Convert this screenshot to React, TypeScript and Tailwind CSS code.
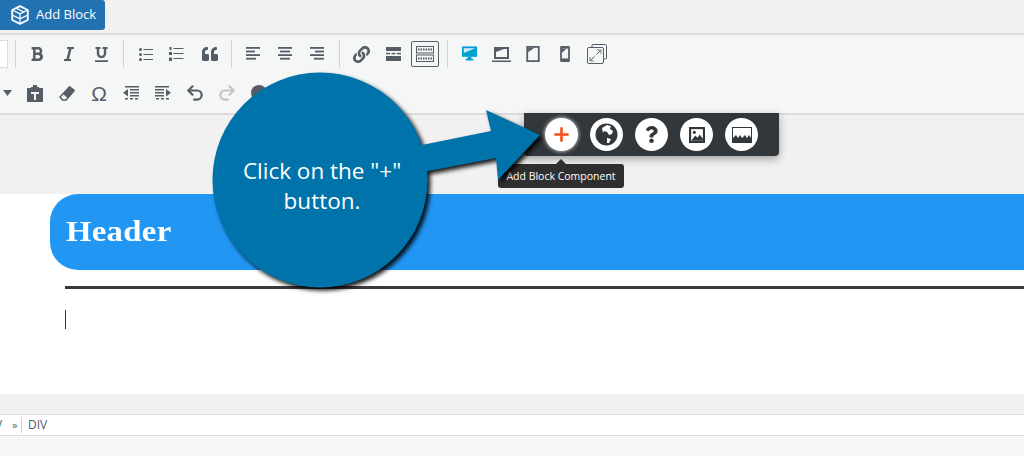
import React from "react";
import { FaBold, FaItalic, FaUnderline, FaQuoteLeft, FaLink, FaQuestion } from "react-icons/fa";
import { Undo2, Redo2, Plus } from "lucide-react";

const ICON = "#555d66";

function Btn({ children, className = "" }: { children: React.ReactNode; className?: string }) {
  return <div className={"w-8 h-7 flex items-center justify-center shrink-0 text-[#555d66] " + className}>{children}</div>;
}

function Sep() {
  return <div className="w-px h-7 bg-[#cfd1d3] shrink-0" />;
}

function Lines({ rows }: { rows: [number, number][] }) {
  return (
    <svg width="16" height="14" viewBox="0 0 16 14" fill={ICON}>
      {rows.map(([x, w], i) => (
        <rect key={i} x={x} y={i * 3.6} width={w} height="1.8" />
      ))}
    </svg>
  );
}

function ScreenIcon({ kind }: { kind: "desktop" | "laptop" | "tablet" | "phone" }) {
  if (kind === "desktop") {
    return (
      <svg width="17" height="18" viewBox="0 0 18 18">
        <path d="M1 1h16v11H1z" fill="#00a0d2" />
        <path d="M3 3h12L3 8z" fill="#cfeefa" />
        <path d="M7 12h4v2h2v2H5v-2h2z" fill="#00a0d2" />
      </svg>
    );
  }
  if (kind === "laptop") {
    return (
      <svg width="19" height="17" viewBox="0 0 19 17">
        <path d="M2 1h15v12H2z" fill={ICON} />
        <path d="M4 3h11v8H4z" fill="#f5f6f6" />
        <path d="M4 3h8L4 6z" fill={ICON} />
        <path d="M0 14.500h19v1.500H0z" fill={ICON} />
      </svg>
    );
  }
  if (kind === "tablet") {
    return (
      <svg width="14" height="16" viewBox="0 0 15 18">
        <path d="M0 0h15v18H0z" fill={ICON} />
        <path d="M2 2h11v14H2z" fill="#f5f6f6" />
        <path d="M2 2h7L2 7z" fill={ICON} />
      </svg>
    );
  }
  return (
    <svg width="10" height="16" viewBox="0 0 11 18">
      <path d="M0 1.500Q0 0 1.500 0h8Q11 0 11 1.500v15q0 1.500-1.500 1.500h-8Q0 18 0 16.500z" fill={ICON} />
      <path d="M2 3h7v11H2z" fill="#f5f6f6" />
      <path d="M2 3h5L2 8z" fill={ICON} />
    </svg>
  );
}

function Toolbar() {
  return (
    <div className="h-[80px] bg-[#f5f6f6] border-b-2 border-[#dcdcde] flex flex-col pt-[5px] overflow-hidden">
      <div className="h-7 flex items-center">
        <div className="w-[8px] h-7 bg-white border border-[#dcdcde] border-l-0 shrink-0" />
        <div className="w-[7px] shrink-0" />
        <Sep />
        <div className="w-[5px] shrink-0" />
        <Btn><FaBold size={16} /></Btn>
        <Btn><FaItalic size={16} /></Btn>
        <Btn><FaUnderline size={15} /></Btn>
        <div className="w-[6px] shrink-0" />
        <Sep />
        <div className="w-[6px] shrink-0" />
        <Btn>
          <svg width="14" height="13" viewBox="0 0 14 13" fill={ICON}>
            <circle cx="1.500" cy="1.500" r="1.500" /><circle cx="1.500" cy="6.500" r="1.500" /><circle cx="1.500" cy="11.500" r="1.500" />
            <rect x="4.500" y="1" width="9.500" height="1" /><rect x="4.500" y="6" width="9.500" height="1" /><rect x="4.500" y="11" width="9.500" height="1" />
          </svg>
        </Btn>
        <Btn className="-translate-x-[2px]">
          <svg width="15" height="14" viewBox="0 0 15 14" fill={ICON}>
            <rect x="0.500" y="0" width="2" height="3" /><rect x="0" y="5" width="3" height="3" /><rect x="0" y="10.500" width="3" height="3.500" />
            <rect x="4.500" y="1" width="10" height="1" /><rect x="4.500" y="6" width="10" height="1" /><rect x="4.500" y="11" width="10" height="1" />
          </svg>
        </Btn>
        <Btn><FaQuoteLeft size={16} /></Btn>
        <div className="w-[5px] shrink-0" />
        <Sep />
        <div className="w-[5px] shrink-0" />
        <Btn><Lines rows={[[1, 14], [1, 9], [1, 14], [1, 10]]} /></Btn>
        <Btn><Lines rows={[[1, 14], [3, 10], [1, 14], [3, 10]]} /></Btn>
        <Btn><Lines rows={[[1, 14], [6, 9], [1, 14], [5, 10]]} /></Btn>
        <div className="w-[6px] shrink-0" />
        <Sep />
        <div className="w-[5px] shrink-0" />
        <Btn><FaLink size={17} /></Btn>
        <Btn>
          <svg width="15" height="14" viewBox="0 0 15 14" fill={ICON}>
            <rect x="0" y="0" width="15" height="4" />
            <rect x="0" y="5.800" width="4" height="1.500" /><rect x="5.500" y="5.800" width="4" height="1.500" /><rect x="11" y="5.800" width="4" height="1.500" />
            <rect x="0" y="9" width="15" height="5" />
          </svg>
        </Btn>
        <div className="w-[28px] h-[26px] mx-[2px] flex items-center justify-center border border-[#555d66] rounded-[2px] shrink-0">
          <svg width="18" height="16" viewBox="0 0 18 16" fill="none" stroke={ICON}>
            <rect x="0.500" y="0.500" width="17" height="6.500" />
            <rect x="0.500" y="9" width="17" height="6.500" />
            <path d="M2 3.500h14M2 12.500h14" strokeDasharray="1.500 1" strokeWidth="2" />
          </svg>
        </div>
        <div className="w-[6px] shrink-0" />
        <Sep />
        <div className="w-[5px] shrink-0" />
        <Btn><ScreenIcon kind="desktop" /></Btn>
        <Btn><ScreenIcon kind="laptop" /></Btn>
        <Btn><ScreenIcon kind="tablet" /></Btn>
        <Btn><ScreenIcon kind="phone" /></Btn>
        <Btn>
          <svg width="20" height="20" viewBox="0 0 20 20" fill="none" stroke={ICON}>
            <path d="M5 3.500V1.500Q5 .5 6 .5h12.500q1 0 1 1V14q0 1-1 1H17" />
            <rect x="0.500" y="3.500" width="16" height="16" rx="1.500" />
            <path d="M3.500 16.500l4-4M13.500 6.500l-4 4" />
            <path d="M3 13v4h4M10 6h4v4" fill="none" strokeWidth="0.800" />
          </svg>
        </Btn>
      </div>
      <div className="h-7 flex items-center mt-[11px]">
        <div className="w-[3px] shrink-0" />
        <svg width="9" height="6" viewBox="0 0 9 6" fill={ICON} className="shrink-0"><path d="M0 0h9L4.500 6z" /></svg>
        <div className="w-[7px] shrink-0" />
        <Btn>
          <svg width="16" height="17" viewBox="0 0 16 17" fill={ICON}>
            <path d="M0 3h4V2h2V0h4v2h2v1h4v14H0z" />
            <path d="M4 7h8v2H9v6H7V9H4z" fill="#f5f6f6" />
          </svg>
        </Btn>
        <Btn>
          <svg width="16" height="15" viewBox="0 0 16 15" fill="none" stroke={ICON} strokeWidth="1.500">
            <path d="M10.500 1L15 4.500 7 14H3.500L1 11z" />
            <path d="M10.500 1L15 4.500 9 11.500 5 8z" fill={ICON} />
          </svg>
        </Btn>
        <Btn><span className="font-['Liberation_Sans',sans-serif] text-[21px] leading-none">Ω</span></Btn>
        <Btn>
          <svg width="16" height="14" viewBox="0 0 16 14" fill={ICON}>
            <rect x="2" y="0" width="14" height="1.500" /><rect x="7" y="3" width="9" height="1.500" /><rect x="7" y="6" width="9" height="1.500" /><rect x="7" y="9" width="9" height="1.500" /><rect x="2" y="12" width="3" height="1.500" /><rect x="7" y="12" width="3" height="1.500" /><rect x="12" y="12" width="3" height="1.500" />
            <path d="M0 6.700L5 3v7.500z" />
          </svg>
        </Btn>
        <Btn>
          <svg width="16" height="14" viewBox="0 0 16 14" fill={ICON}>
            <rect x="0" y="0" width="14" height="1.500" /><rect x="0" y="3" width="9" height="1.500" /><rect x="0" y="6" width="9" height="1.500" /><rect x="0" y="9" width="9" height="1.500" /><rect x="1" y="12" width="3" height="1.500" /><rect x="6" y="12" width="3" height="1.500" /><rect x="11" y="12" width="3" height="1.500" />
            <path d="M16 6.700L11 3v7.500z" />
          </svg>
        </Btn>
        <Btn><Undo2 size={20} strokeWidth={2.6} /></Btn>
        <Btn className="text-[#c2c4c6]"><Redo2 size={20} strokeWidth={2.6} /></Btn>
        <Btn>
          <div className="w-4 h-4 rounded-full bg-[#555d66]" />
        </Btn>
      </div>
    </div>
  );
}

function Popup() {
  const dark = "#32373c";
  return (
    <>
      <div className="absolute left-[524px] top-[113px] w-[255px] h-[43px] bg-[#32373c] rounded-b-[4px] shadow-[0_3px_8px_rgba(0,0,0,0.35)] flex items-center pl-[21px] gap-3">
        <div className="w-[33px] h-[33px] rounded-full bg-white flex items-center justify-center shadow-[0_0_4px_rgba(255,255,255,0.9)] shrink-0">
          <Plus size={21} strokeWidth={3} color="#f4511e" />
        </div>
        <div className="w-[33px] h-[33px] rounded-full bg-white flex items-center justify-center shrink-0">
          <svg width="25" height="25" viewBox="0 0 25 25">
            <circle cx="12.500" cy="12.500" r="11" fill={dark} />
            <path d="M8 6l5-3 4 1-1 3 3 2-1 3-3 1-2-3-3-1-1 2z M13 16l4 1-2 4-2 0z" fill="#fff" />
          </svg>
        </div>
        <div className="w-[33px] h-[33px] rounded-full bg-white flex items-center justify-center shrink-0 text-[#32373c]">
          <FaQuestion size={17} />
        </div>
        <div className="w-[33px] h-[33px] rounded-full bg-white flex items-center justify-center shrink-0">
          <svg width="16" height="16" viewBox="0 0 15 15">
            <path d="M0 0h15v15H0z" fill={dark} />
            <path d="M2 2h11v11H2z" fill="#fff" />
            <path d="M2 13l4-5 2 2 2-3 3 4v2z" fill={dark} />
            <circle cx="5" cy="5" r="1.500" fill={dark} />
          </svg>
        </div>
        <div className="w-[33px] h-[33px] rounded-full bg-white flex items-center justify-center shrink-0">
          <svg width="20" height="16" viewBox="0 0 20 16">
            <path d="M0 0h20v16H0z" fill={dark} />
            <path d="M1 1h18v10l-2-3-2 3-2-3-3 3-2-3-2 3-2-3-3 3z" fill="#fff" />
          </svg>
        </div>
      </div>
      <div className="absolute left-[556px] top-[159px] w-0 h-0 border-x-[5px] border-x-transparent border-b-[5px] border-b-[#2f2f2f]" />
      <div className="absolute left-[498px] top-[164px] w-[126px] h-[24px] pt-[2px] bg-[#2f2f2f] rounded-[3px] flex items-center justify-center text-white text-[10.500px] font-['Open_Sans',sans-serif]">
        Add Block Component
      </div>
    </>
  );
}

function Callout() {
  return (
    <>
      <svg
        width="340"
        height="230"
        viewBox="0 0 340 230"
        className="absolute left-[205px] top-[70px] drop-shadow-[3px_3px_2px_rgba(0,0,0,0.9)]"
      >
        <circle cx="115" cy="110" r="107.500" fill="#0073aa" />
        <path d="M212 76L286 61 281 40 335 65 293 110 291 88 218 102z" fill="#0073aa" />
      </svg>
      <div className="absolute left-[225px] top-[156px] w-[194px] text-center text-white text-[22.500px] leading-[30px] font-['Open_Sans',sans-serif]">
        Click on the "+" button.
      </div>
    </>
  );
}

export default function App() {
  return (
    <div className="relative w-[1024px] h-[456px] overflow-hidden bg-[#f1f1f1] font-['Open_Sans',sans-serif]">
      <div className="h-[35px] border-b-2 border-[#dcdcde]">
        <div className="w-[105px] h-[30px] bg-[#2271b1] rounded-r-[3px] flex items-center pl-[10px] gap-[6px] text-white text-[13px]">
          <svg width="20" height="20" viewBox="0 0 18 18" fill="none" stroke="#fff" strokeWidth="1.600" strokeLinejoin="round">
            <path d="M9 1l7 3.500v9L9 17l-7-3.500v-9z" />
            <path d="M2 4.500L9 8l7-3.500M9 8v9M5.500 2.800l7 3.500M2 9l7 3.500L16 9" strokeWidth="1.100" />
          </svg>
          Add Block
        </div>
      </div>
      <Toolbar />
      <div className="h-[79px]" />
      <div className="h-[200px] bg-white pl-[50px]">
        <div className="h-[76px] bg-[#2196f3] rounded-l-[28px] flex items-center pl-4 pb-[4px] text-white font-['Liberation_Serif',serif] font-bold text-[30px] tracking-[0.3px]">
          <span className="inline-block origin-left scale-x-[1.09]">Header</span>
        </div>
        <div className="h-[3px] bg-[#3a3a3a] ml-[15px] mt-4" />
        <div className="w-px h-[19px] bg-[#333] ml-[15px] mt-[21px]" />
      </div>
      <div className="h-5" />
      <div className="h-[22px] bg-white border-y border-[#dcdcde] flex items-center text-[12px] text-[#555d66]">
        <span className="-ml-[5px] w-[9px]">V</span>
        <span className="ml-2 w-[9px] text-[11px]">»</span>
        <div className="w-px h-4 bg-[#cfd1d3]" />
        <span className="ml-[6px]">DIV</span>
      </div>
      <div className="h-[21px] bg-[#f5f6f6]" />
      <Popup />
      <Callout />
    </div>
  );
}
